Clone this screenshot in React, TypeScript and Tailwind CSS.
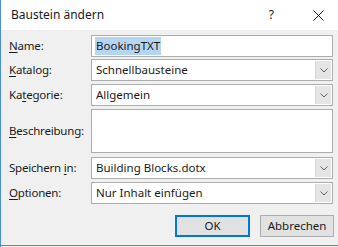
const FONT = { fontFamily: '"Noto Sans", "Open Sans", sans-serif' };

function Label({ text, u }: { text: string; u: number }) {
  // u = Index des unterstrichenen Buchstabens
  return (
    <span>
      {text.slice(0, u)}
      <span className="underline underline-offset-2">{text[u]}</span>
      {text.slice(u + 1)}
    </span>
  );
}

function Chevron() {
  return (
    <svg width="8" height="5" viewBox="0 0 8 5" fill="none">
      <path d="M0.5 0.5 L4 4 L7.5 0.5" stroke="#606060" strokeWidth="1" />
    </svg>
  );
}

function Combo({ value }: { value: string }) {
  return (
    <div className="flex h-[22px] w-[242px] shrink-0 items-stretch border border-[#adadad] bg-white">
      <div className="flex flex-1 items-center pl-[4px] text-[11.5px] text-[#1a1a1a]">{value}</div>
      <div className="my-px mr-px flex w-[16px] items-center justify-center border-l border-[#d6d6d6] bg-[#e5e5e5]">
        <Chevron />
      </div>
    </div>
  );
}

function Row({ label, children, className = '' }: { label: React.ReactNode; children: React.ReactNode; className?: string }) {
  return (
    <div className={`flex items-center ${className}`}>
      <div className="w-[90px] shrink-0 whitespace-nowrap pl-[8px] text-[11.5px] tracking-[-0.2px] text-[#1a1a1a]">{label}</div>
      {children}
    </div>
  );
}

export default function App() {
  return (
    <div style={FONT} className="flex h-[247px] w-[338px] flex-col overflow-hidden border-l border-[#4a8fd8] bg-white">
      {/* Titelleiste */}
      <div className="flex h-[30px] items-center bg-white">
        <span className="pl-[10px] text-[12px] text-[#1a1a1a]">Baustein ändern</span>
        <span className="ml-auto mr-[39px] text-[12px] text-[#1a1a1a]">?</span>
        <svg width="11" height="11" viewBox="0 0 11 11" className="mr-[14px]">
          <path d="M0.5 0.5 L10.5 10.5 M10.5 0.5 L0.5 10.5" stroke="#222" strokeWidth="1" />
        </svg>
      </div>

      {/* Inhalt */}
      <div className="flex flex-1 flex-col bg-[#f0f0f0] pt-[5px]">
        <Row label={<Label text="Name:" u={0} />}>
          <div className="flex h-[22px] w-[242px] shrink-0 items-center border border-[#adadad] bg-white pl-[3px] text-[11.5px] text-[#1a1a1a]">
            <span className="bg-[#b5d5f0] px-px">BookingTXT</span>
          </div>
        </Row>
        <Row className="mt-[2px]" label={<Label text="Katalog:" u={0} />}>
          <Combo value="Schnellbausteine" />
        </Row>
        <Row className="mt-[3px]" label={<Label text="Kategorie:" u={2} />}>
          <Combo value="Allgemein" />
        </Row>
        <Row className="mt-[3px]" label={<Label text="Beschreibung:" u={0} />}>
          <div className="h-[44px] w-[242px] shrink-0 border border-[#adadad] bg-white" />
        </Row>
        <Row className="mt-[4px]" label={<Label text="Speichern in:" u={10} />}>
          <Combo value="Building Blocks.dotx" />
        </Row>
        <Row className="mt-[3px]" label={<Label text="Optionen:" u={0} />}>
          <Combo value="Nur Inhalt einfügen" />
        </Row>

        {/* Schaltflächen */}
        <div className="mt-[11px] flex justify-end gap-[10px] pr-[4px]">
          <button className="h-[22px] w-[75px] border-2 border-[#0078d7] bg-[#e1e1e1] text-[11.5px] text-[#1a1a1a]">OK</button>
          <button className="h-[22px] w-[74px] border border-[#adadad] bg-[#e1e1e1] text-[11.5px] text-[#1a1a1a]">Abbrechen</button>
        </div>

        <div className="mt-auto mb-[1px] h-px bg-[#4a8fd8]" />
      </div>
    </div>
  );
}
